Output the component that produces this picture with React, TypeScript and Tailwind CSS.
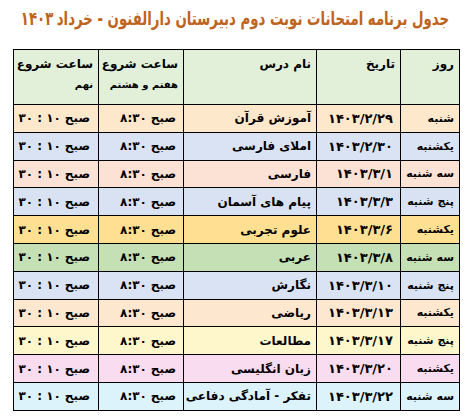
import React from "react";

type Row = {
  day: string;
  date: string;
  subject: string;
  bg: string;
};

const rows: Row[] = [
  { day: "شنبه", date: "۱۴۰۳/۲/۲۹", subject: "آموزش قرآن", bg: "bg-[#fde8cb]" },
  { day: "یکشنبه", date: "۱۴۰۳/۲/۳۰", subject: "املای فارسی", bg: "bg-[#dae3f3]" },
  { day: "سه شنبه", date: "۱۴۰۳/۳/۱", subject: "فارسی", bg: "bg-[#fbe2d5]" },
  { day: "پنج شنبه", date: "۱۴۰۳/۳/۳", subject: "پیام های آسمان", bg: "bg-[#d9e2f3]" },
  { day: "یکشنبه", date: "۱۴۰۳/۳/۶", subject: "علوم تجربی", bg: "bg-[#ffdf91]" },
  { day: "سه شنبه", date: "۱۴۰۳/۳/۸", subject: "عربی", bg: "bg-[#c5e0b4]" },
  { day: "پنج شنبه", date: "۱۴۰۳/۳/۱۰", subject: "نگارش", bg: "bg-[#dae3f3]" },
  { day: "یکشنبه", date: "۱۴۰۳/۳/۱۳", subject: "ریاضی", bg: "bg-[#fde8cf]" },
  { day: "پنج شنبه", date: "۱۴۰۳/۳/۱۷", subject: "مطالعات", bg: "bg-[#fff7cc]" },
  { day: "یکشنبه", date: "۱۴۰۳/۳/۲۰", subject: "زبان انگلیسی", bg: "bg-[#fadcf0]" },
  { day: "سه شنبه", date: "۱۴۰۳/۳/۲۲", subject: "تفکر - آمادگی دفاعی", bg: "bg-[#ddf3fb]" },
];

const cell =
  "border-[1.5px] border-black px-[5px] text-right align-middle whitespace-nowrap overflow-hidden leading-none";

export default function App() {
  return (
    <main
      className="w-[469px] h-[419px] bg-white overflow-hidden"
      style={{ fontFamily: '"DejaVu Sans", sans-serif' }}
    >
      <h1 dir="rtl" className="flex h-[49px] items-start justify-center pt-[9px]">
        <span className="inline-flex w-max shrink-0 flex-nowrap gap-[5px] text-[19px] leading-none font-bold text-[#bf6420] [transform:scaleX(0.7)]">
          <span className="whitespace-nowrap">
            جدول برنامه امتحانات نوبت دوم دبیرستان دارالفنون - خرداد
          </span>
          <span className="whitespace-nowrap">۱۴۰۳</span>
        </span>
      </h1>
      <table
        dir="rtl"
        className="ml-[13px] w-[446px] table-fixed border-collapse text-[12px] font-bold text-black"
      >
        <colgroup>
          <col className="w-[59px]" />
          <col className="w-[84px]" />
          <col className="w-[133px]" />
          <col className="w-[85px]" />
          <col className="w-[85px]" />
        </colgroup>
        <thead>
          <tr className="h-[55px] bg-[#e2efd9]">
            <th className={`${cell} !align-top pt-[8px] font-bold`}>روز</th>
            <th className={`${cell} !align-top pt-[8px] font-bold`}>تاریخ</th>
            <th className={`${cell} !align-top pt-[8px] font-bold`}>نام درس</th>
            <th className={`${cell} !align-top pt-[8px] font-bold`}>
              <div>ساعت شروع</div>
              <div className="mt-[10px] text-[10px]">هفتم و هشتم</div>
            </th>
            <th className={`${cell} !align-top pt-[8px] font-bold`}>
              <div>ساعت شروع</div>
              <div className="mt-[10px] text-[10px]">نهم</div>
            </th>
          </tr>
        </thead>
        <tbody>
          {rows.map((r, i) => (
            <tr key={i} className={`h-[27.8px] ${r.bg}`}>
              <td className={`${cell} text-[11px]`}>{r.day}</td>
              <td className={`${cell} pr-[7px] text-[13px]`}>
                <span dir="ltr" className="inline-block">{r.date}</span>
              </td>
              <td className={cell}>{r.subject}</td>
              <td className={`${cell} pr-[7px]`}>
                <span className="inline-flex gap-[4px]">
                  <span>صبح</span>
                  <span dir="ltr">۸:۳۰</span>
                </span>
              </td>
              <td className={`${cell} pr-[8px]`}>
                <span className="inline-flex gap-[4px]">
                  <span>صبح</span>
                  <span dir="ltr">۳۰ : ۱۰</span>
                </span>
              </td>
            </tr>
          ))}
        </tbody>
      </table>
    </main>
  );
}
